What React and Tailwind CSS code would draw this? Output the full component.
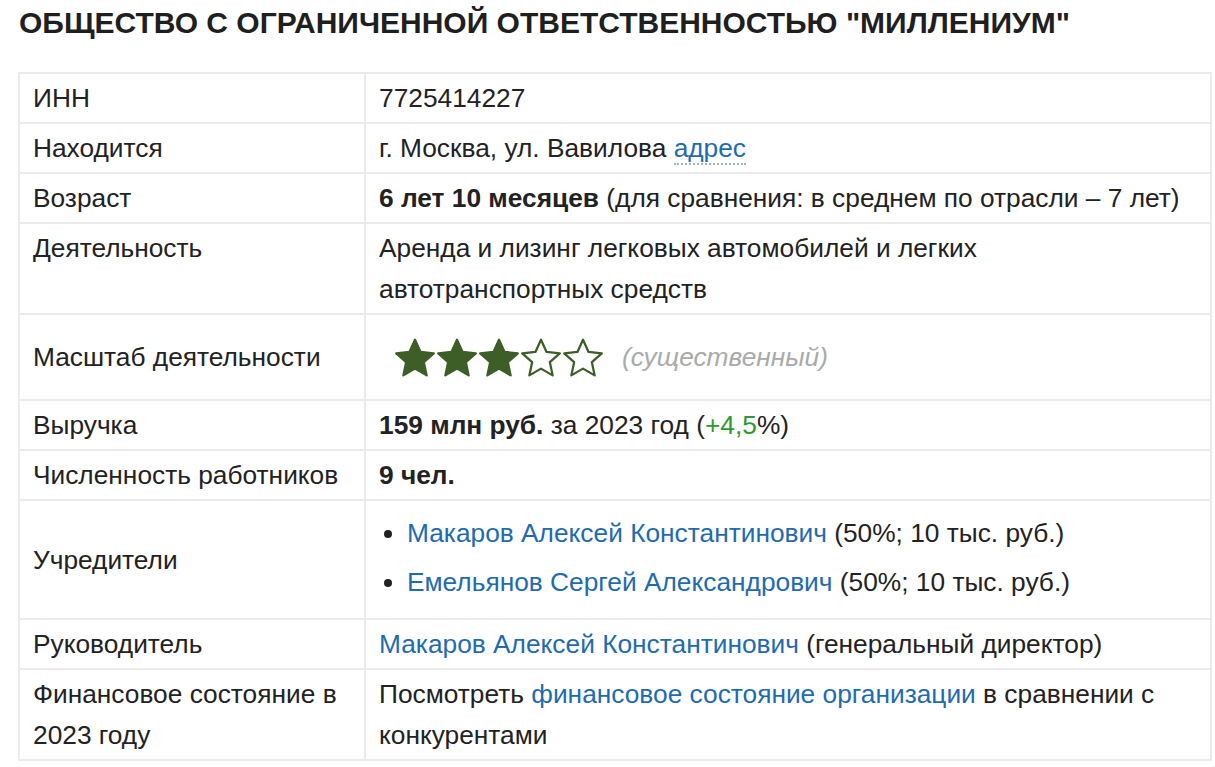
const rows = [
  { label: 'ИНН', value: <>7725414227</> },
  {
    label: 'Находится',
    value: (
      <>
        г. Москва, ул. Вавилова{' '}
        <span className="text-[#1f6bb0] border-b-2 border-dotted border-[#9fb8d2]">адрес</span>
      </>
    ),
  },
  {
    label: 'Возраст',
    value: (
      <>
        <b>6 лет 10 месяцев</b> (для сравнения: в среднем по отрасли – 7 лет)
      </>
    ),
  },
  { label: 'Деятельность', top: true, value: <>Аренда и лизинг легковых автомобилей и легких автотранспортных средств</> },
];

const Star = ({ filled }) => (
  <svg width="42" height="40" viewBox="0 0 24 23">
    <path
      d="M12 1l3.2 7 7.6.8-5.7 5.1 1.6 7.6L12 17.6l-6.7 3.9 1.6-7.6-5.7-5.1 7.6-.8z"
      fill={filled ? '#3d5e27' : '#fff'}
      stroke="#3d5e27"
      strokeWidth="1.3"
      strokeLinejoin="round"
    />
  </svg>
);

const Link = ({ children }) => <span className="text-[#1f6bb0]">{children}</span>;

const cellL = 'border-2 border-[#ebebeb] pl-[13px] pr-2 pt-[4px] pb-[3px]';
const cellR = 'border-2 border-[#ebebeb] align-middle pl-[13px] pr-3 pt-[4px] pb-[3px]';

export default function App() {
  return (
    <div className="bg-white min-h-screen text-[#222] text-[26.3px] leading-[41px]" style={{ fontFamily: '"Liberation Sans", Arial, sans-serif' }}>
      <h1 className="pl-[19px] pt-[3px] text-[30px] leading-[40px] font-bold text-[#1f1f1f]">
        ОБЩЕСТВО С ОГРАНИЧЕННОЙ ОТВЕТСТВЕННОСТЬЮ "МИЛЛЕНИУМ"
      </h1>
      <table className="ml-[18px] mt-[29px] w-[1194px] border-collapse">
        <tbody>
          {rows.map((r) => (
            <tr key={r.label}>
              <td className={`${cellL} w-[346px] ${r.top ? 'align-top' : 'align-middle'}`}>{r.label}</td>
              <td className={cellR}>{r.value}</td>
            </tr>
          ))}
          <tr>
            <td className={`${cellL} align-middle h-[86px]`}>Масштаб деятельности</td>
            <td className={cellR}>
              <div className="flex items-center pl-[15px]">
                <Star filled />
                <Star filled />
                <Star filled />
                <Star />
                <Star />
                <span className="ml-[18px] italic text-[#aaa]">(существенный)</span>
              </div>
            </td>
          </tr>
          <tr>
            <td className={`${cellL} align-middle`}>Выручка</td>
            <td className={cellR}>
              <b>159 млн руб.</b> за 2023 год (<span className="text-[#2e9a2e]">+4,5</span>%)
            </td>
          </tr>
          <tr>
            <td className={`${cellL} align-middle`}>Численность работников</td>
            <td className={cellR}>
              <b>9 чел.</b>
            </td>
          </tr>
          <tr>
            <td className={`${cellL} align-middle`}>Учредители</td>
            <td className={cellR}>
              <ul className="list-disc pl-[28px] mt-[8px] mb-[12px] flex flex-col gap-[8px]">
                <li>
                  <Link>Макаров Алексей Константинович</Link> (50%; 10 тыс. руб.)
                </li>
                <li>
                  <Link>Емельянов Сергей Александрович</Link> (50%; 10 тыс. руб.)
                </li>
              </ul>
            </td>
          </tr>
          <tr>
            <td className={`${cellL} align-middle`}>Руководитель</td>
            <td className={cellR}>
              <Link>Макаров Алексей Константинович</Link> (генеральный директор)
            </td>
          </tr>
          <tr>
            <td className={`${cellL} align-top`}>Финансовое состояние в 2023 году</td>
            <td className={cellR}>
              Посмотреть <Link>финансовое состояние организации</Link> в сравнении с конкурентами
            </td>
          </tr>
        </tbody>
      </table>
    </div>
  );
}
